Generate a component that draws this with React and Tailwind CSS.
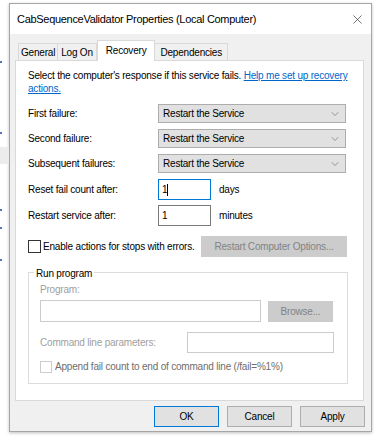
import { ChevronDown, X } from 'lucide-react'

const failures = ['First failure:', 'Second failure:', 'Subsequent failures:']

function Select() {
  return (
    <div className="w-[188px] h-[19px] bg-[#e1e1e1] border border-[#adadad] flex items-center justify-between pl-[4px] pr-[4px]">
      <span>Restart the Service</span>
      <ChevronDown size={12} strokeWidth={1.2} className="text-[#606060]" />
    </div>
  )
}

function Button({ children, primary, disabled, className = '' }) {
  return (
    <div
      className={`h-[21px] flex items-center justify-center border ${
        primary ? 'border-[#0078d7]' : disabled ? 'border-[#cccccc]' : 'border-[#adadad]'
      } ${disabled ? 'bg-[#cccccc] text-[#838383]' : 'bg-[#e1e1e1]'} ${className}`}
    >
      {children}
    </div>
  )
}

export default function App() {
  return (
    <div className="w-[374px] h-[437px] bg-white flex overflow-hidden font-['Liberation_Sans',sans-serif] text-[10px] tracking-[-0.2px] text-black leading-[13px]">
      {/* bits of the window behind */}
      <div className="w-[9px] relative">
        <span className="absolute left-0 top-[61px] w-[2px] h-[2px] bg-[#5a6fc0]" />
        <span className="absolute left-0 top-[132px] w-[2px] h-[2px] bg-[#5a6fc0]" />
        <span className="absolute left-0 top-[147px] w-[9px] h-[17px] bg-[#ececec]" />
        <span className="absolute left-0 top-[209px] w-[2px] h-[2px] bg-[#5a6fc0]" />
        <span className="absolute left-0 top-[227px] w-[2px] h-[2px] bg-[#5a6fc0]" />
        <span className="absolute left-0 top-[259px] w-[2px] h-[2px] bg-[#5a6fc0]" />
      </div>

      <div className="mt-[3px] w-[363px] h-[429px] border border-[#a6a6a6] bg-[#f0f0f0] flex flex-col shadow-[0_1px_3px_rgba(0,0,0,0.25)]">
        {/* Title bar */}
        <div className="h-[30px] bg-white flex items-center justify-between pl-[7px] pr-[6px] text-[11px] tracking-[-0.3px]">
          <span>CabSequenceValidator Properties (Local Computer)</span>
          <X size={15} strokeWidth={1} className="text-[#222]" />
        </div>

        {/* Tabs */}
        <div className="h-[22px] mt-[4px] ml-[8px] flex items-end">
          <div className="h-[17px] px-[2px] flex items-center border border-b-0 border-[#d9d9d9] bg-[#f0f0f0]">General</div>
          <div className="h-[17px] px-[3px] flex items-center border border-l-0 border-b-0 border-[#d9d9d9] bg-[#f0f0f0]">Log On</div>
          <div className="h-[21px] px-[8px] -mb-px flex items-start pt-[3px] border border-b-0 border-[#d9d9d9] bg-white relative z-10">Recovery</div>
          <div className="h-[17px] px-[5px] flex items-center border border-l-0 border-b-0 border-[#d9d9d9] bg-[#f0f0f0]">Dependencies</div>
        </div>

        {/* Panel */}
        <div className="ml-[5px] w-[349px] h-[341px] bg-white border border-[#d9d9d9] pl-[12px] pt-[8px] flex flex-col">
          <div>
            <div>
              Select the computer's response if this service fails.{' '}
              <span className="text-[#0066cc] underline">Help me set up recovery</span>
            </div>
            <div className="text-[#0066cc] underline">actions.</div>
          </div>

          <div className="mt-[9px] flex flex-col gap-[6px]">
            {failures.map((label) => (
              <div key={label} className="flex items-center h-[19px]">
                <span className="w-[130px]">{label}</span>
                <Select />
              </div>
            ))}
          </div>

          <div className="mt-[6px] flex items-center h-[21px]">
            <span className="w-[130px]">Reset fail count after:</span>
            <div className="w-[53px] h-[21px] border border-[#0078d7] flex items-center pl-[3px]">
              1<span className="w-px h-[12px] bg-black" />
            </div>
            <span className="ml-[8px]">days</span>
          </div>

          <div className="mt-[5px] flex items-center h-[21px]">
            <span className="w-[130px]">Restart service after:</span>
            <div className="w-[53px] h-[21px] border border-[#7a7a7a] flex items-center pl-[3px]">1</div>
            <span className="ml-[8px]">minutes</span>
          </div>

          <div className="mt-[10px] flex items-center h-[21px]">
            <div className="w-[13px] h-[13px] border border-[#333] bg-white" />
            <span className="ml-[2px] w-[158px]">Enable actions for stops with errors.</span>
            <Button disabled className="w-[146px] h-[20px]">Restart Computer Options...</Button>
          </div>

          {/* Run program group */}
          <div className="relative mt-[15px] w-[320px] h-[112px] border border-[#dcdcdc] pl-[11px] pt-[10px] text-[#a0a0a0]">
            <span className="absolute -top-[6px] left-[5px] px-[2px] bg-white text-black">Run program</span>
            <div>Program:</div>
            <div className="mt-[4px] flex items-center">
              <div className="w-[221px] h-[22px] border border-[#cccccc]" />
              <Button disabled className="ml-[7px] w-[65px] h-[18px]">Browse...</Button>
            </div>
            <div className="mt-[10px] flex items-center">
              <span className="w-[147px]">Command line parameters:</span>
              <div className="w-[147px] h-[21px] border border-[#cccccc]" />
            </div>
            <div className="mt-[7px] flex items-center">
              <div className="w-[12px] h-[12px] border border-[#cccccc]" />
              <span className="ml-[3px] text-[#6d6d6d]">Append fail count to end of command line (/fail=%1%)</span>
            </div>
          </div>
        </div>

        {/* Buttons */}
        <div className="mt-[5px] flex justify-end gap-[8px] pr-[6px]">
          <Button primary className="w-[65px]">OK</Button>
          <Button className="w-[65px]">Cancel</Button>
          <Button className="w-[65px]">Apply</Button>
        </div>
      </div>
    </div>
  )
}
